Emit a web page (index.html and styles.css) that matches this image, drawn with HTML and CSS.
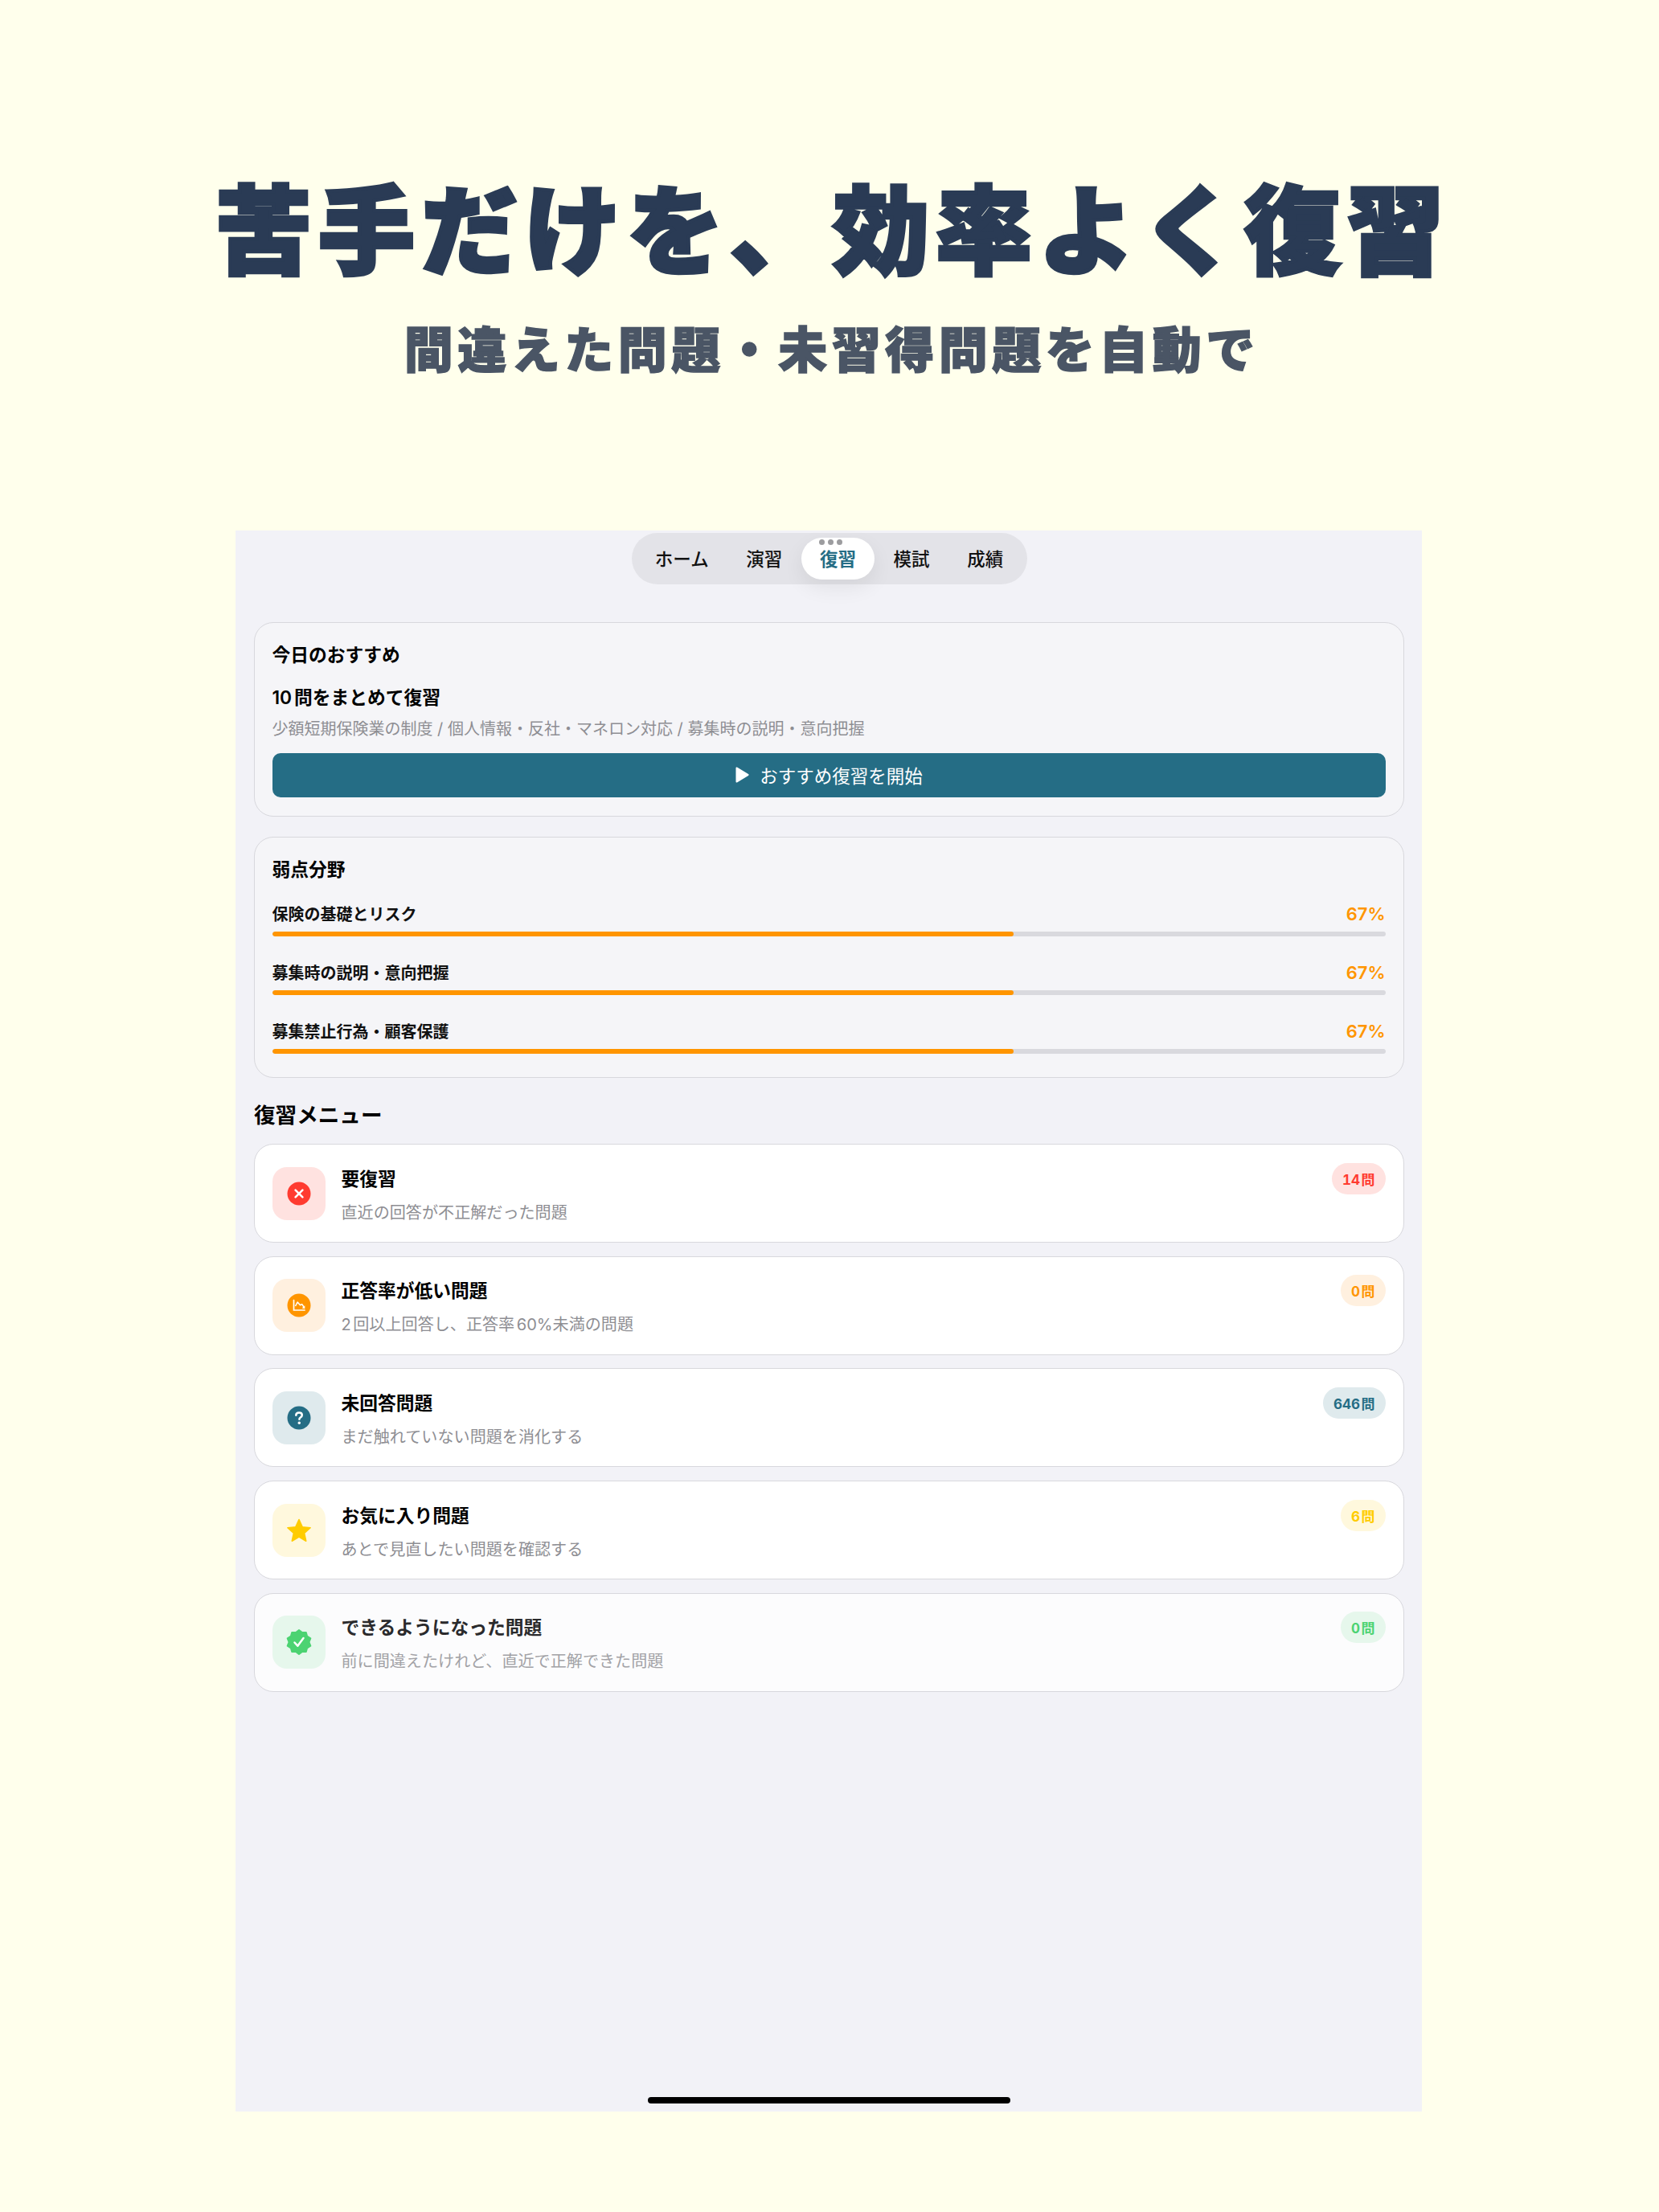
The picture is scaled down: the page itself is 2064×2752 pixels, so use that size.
FILE: index.html
```html
<!DOCTYPE html>
<html lang="ja">
<head>
<meta charset="utf-8">
<title>復習</title>
<link rel="stylesheet" href="styles.css">
</head>
<body>
<header class="hero">
  <h1 class="hero-title">苦手だけを、効率よく復習</h1>
  <p class="hero-sub">間違えた問題・未習得問題を自動で</p>
</header>
<main class="app">
  <nav class="tabs">
    <span class="tab">ホーム</span>
    <span class="tab">演習</span>
    <span class="tab tab-active">復習</span>
    <span class="tab">模試</span>
    <span class="tab">成績</span>
    <span class="dots"><i></i><i></i><i></i></span>
  </nav>

  <section class="card card-rec">
    <h2 class="card-title">今日のおすすめ</h2>
    <p class="rec-head">10問をまとめて復習</p>
    <p class="rec-sub">少額短期保険業の制度 / 個人情報・反社・マネロン対応 / 募集時の説明・意向把握</p>
    <button class="start">
      <svg class="play" viewBox="0 0 18 22"><path d="M1.5 2.5v17a1 1 0 0 0 1.5.9l14-8.5a1 1 0 0 0 0-1.8L3 1.6a1 1 0 0 0-1.5.9z" fill="#fff"/></svg>
      <span>おすすめ復習を開始</span>
    </button>
  </section>

  <section class="card card-weak">
    <h2 class="card-title">弱点分野</h2>
    <div class="weak-list">
      <div class="weak">
        <div class="weak-line"><span class="weak-name">保険の基礎とリスク</span><span class="weak-pct">67%</span></div>
        <div class="track"><div class="fill" style="width:66.6%"></div></div>
      </div>
      <div class="weak">
        <div class="weak-line"><span class="weak-name">募集時の説明・意向把握</span><span class="weak-pct">67%</span></div>
        <div class="track"><div class="fill" style="width:66.6%"></div></div>
      </div>
      <div class="weak">
        <div class="weak-line"><span class="weak-name">募集禁止行為・顧客保護</span><span class="weak-pct">67%</span></div>
        <div class="track"><div class="fill" style="width:66.6%"></div></div>
      </div>
    </div>
  </section>

  <h2 class="menu-title">復習メニュー</h2>
  <div class="menu">
    <article class="row">
      <div class="ico ico-red">
        <svg class="glyph" viewBox="0 0 30 30"><circle cx="15" cy="15" r="14.5" fill="#ff3b30"/><path d="M10.6 10.6l8.8 8.8M19.4 10.6l-8.8 8.8" stroke="#fff" stroke-width="2.6" stroke-linecap="round" fill="none"/></svg>
      </div>
      <div class="txt"><h3 class="row-title">要復習</h3><p class="row-sub">直近の回答が不正解だった問題</p></div>
      <span class="badge badge-red">14 問</span>
    </article>
    <article class="row">
      <div class="ico ico-orange">
        <svg class="glyph" viewBox="0 0 30 30"><circle cx="15" cy="15" r="14.5" fill="#ff9500"/><path d="M8.5 8.5v12.5h13.5" stroke="#fff" stroke-width="1.7" stroke-linecap="round" fill="none"/><path d="M10.5 16l2.6-5 3.4 3.8 2.2-1.2 2.3 3.4" stroke="#fff" stroke-width="1.6" stroke-linejoin="round" fill="none"/><path d="M22.3 15.2v4l-3.7-.6z" fill="#fff"/></svg>
      </div>
      <div class="txt"><h3 class="row-title">正答率が低い問題</h3><p class="row-sub">2回以上回答し、正答率60%未満の問題</p></div>
      <span class="badge badge-orange">0 問</span>
    </article>
    <article class="row">
      <div class="ico ico-teal">
        <svg class="glyph" viewBox="0 0 30 30"><circle cx="15" cy="15" r="14.5" fill="#256d85"/><path d="M11.3 11.8c0-2 1.6-3.4 3.8-3.4s3.7 1.3 3.7 3.1c0 1.5-.8 2.2-2 3-1 .7-1.4 1.2-1.4 2.3" stroke="#fff" stroke-width="2.5" stroke-linecap="round" fill="none"/><circle cx="15.3" cy="21.3" r="1.7" fill="#fff"/></svg>
      </div>
      <div class="txt"><h3 class="row-title">未回答問題</h3><p class="row-sub">まだ触れていない問題を消化する</p></div>
      <span class="badge badge-teal">646 問</span>
    </article>
    <article class="row">
      <div class="ico ico-yellow">
        <svg class="glyph glyph-lg" viewBox="0 0 34 34"><path d="M17 3.5l4.1 9.2 10 1-7.5 6.7 2.1 9.8L17 25.1l-8.7 5.1 2.1-9.8-7.5-6.7 10-1z" fill="#ffcc00" stroke="#ffcc00" stroke-width="1.6" stroke-linejoin="round"/></svg>
      </div>
      <div class="txt"><h3 class="row-title">お気に入り問題</h3><p class="row-sub">あとで見直したい問題を確認する</p></div>
      <span class="badge badge-yellow">6 問</span>
    </article>
    <article class="row row-faded">
      <div class="ico ico-green">
        <svg class="glyph glyph-lg" viewBox="-17 -17 34 34"><polygon transform="rotate(-90)" points="15,0 11.9,3.9 12.1,8.8 7.3,10.1 4.6,14.3 0,12.5 -4.6,14.3 -7.3,10.1 -12.1,8.8 -11.9,3.9 -15,0 -11.9,-3.9 -12.1,-8.8 -7.3,-10.1 -4.6,-14.3 0,-12.5 4.6,-14.3 7.3,-10.1 12.1,-8.8 11.9,-3.9" fill="#4cd372" stroke="#4cd372" stroke-width="2" stroke-linejoin="round"/><path d="M-5.5 .5l3.8 4.2L5.5-5" stroke="#fff" stroke-width="2.5" stroke-linecap="round" stroke-linejoin="round" fill="none"/></svg>
      </div>
      <div class="txt"><h3 class="row-title">できるようになった問題</h3><p class="row-sub">前に間違えたけれど、直近で正解できた問題</p></div>
      <span class="badge badge-green">0 問</span>
    </article>
  </div>
  <div class="home-bar"></div>
</main>
</body>
</html>
```

FILE: styles.css
```css
* { box-sizing: border-box; }
html, body { margin: 0; padding: 0; }
body {
  width: 2064px;
  height: 2752px;
  background: #ffffec;
  font-family: Inter, "Noto Sans CJK JP", sans-serif;
  color: #000;
  overflow: hidden;
  text-autospace: normal;
}
h1, h2, h3, p { margin: 0; font-weight: inherit; }

.hero { height: 660px; padding-top: 210px; text-align: center; font-family: "Noto Sans CJK JP", sans-serif; }
.hero-title {
  font-size: 120px;
  line-height: 140px;
  font-weight: 900;
  letter-spacing: 8px;
  text-indent: 8px;
  color: #2a3b55;
  -webkit-text-stroke: 4.5px #2a3b55;
  white-space: nowrap;
}
.hero-sub {
  margin-top: 42px;
  font-size: 61px;
  line-height: 80px;
  font-weight: 900;
  letter-spacing: 5.5px;
  text-indent: 5.5px;
  color: #4a5565;
  -webkit-text-stroke: 1.5px #4a5565;
  white-space: nowrap;
}

.app {
  position: relative;
  width: 1476px;
  height: 1967px;
  margin-left: 293px;
  padding: 3px 22px 0 23px;
  background: #f2f2f7;
}

.tabs {
  position: relative;
  width: 492px;
  height: 64px;
  margin: 0 auto;
  padding: 0 6px;
  display: flex;
  align-items: center;
  background: #e3e3e8;
  border-radius: 32px;
}
.tab {
  height: 52px;
  padding: 0 0 3px;
  width: 92px;
  justify-content: center;
  display: flex;
  align-items: center;
  font-size: 22.5px;
  font-weight: 500;
  color: #111;
  border-radius: 26px;
}
.tab:first-child { width: 114px; }
.tab-active {
  background: #fff;
  color: #256d85;
  font-weight: 600;
  box-shadow: 0 10px 26px rgba(0, 0, 0, .07);
}
.dots {
  position: absolute;
  left: 233px;
  top: 8px;
  display: flex;
  gap: 4px;
}
.dots i { width: 7px; height: 7px; border-radius: 50%; background: #9c9c9f; }

.card {
  background: #f5f5f8;
  border: 1.5px solid #d8d8dd;
  border-radius: 24px;
  padding: 24.5px 22.5px 23.5px 21.5px;
}
.card-rec { margin-top: 47px; }
.card-weak { margin-top: 25px; padding-bottom: 29.5px; }
.card-title { font-size: 22.75px; line-height: 30px; font-weight: 600; }

.rec-head { margin-top: 23px; font-size: 22.75px; line-height: 30px; font-weight: 600; }
.rec-sub { margin-top: 9px; font-size: 20px; line-height: 30px; color: #8e8e93; white-space: nowrap; }
.start {
  width: 100%;
  height: 55px;
  margin-top: 15px;
  border: 0;
  border-radius: 10px;
  background: #256d85;
  color: #fff;
  font: inherit;
  font-size: 22.5px;
  display: flex;
  align-items: center;
  justify-content: center;
  gap: 13px;
}
.play { width: 18px; height: 22px; }

.weak-list { margin-top: 26px; display: flex; flex-direction: column; gap: 31px; }
.weak-line { display: flex; justify-content: space-between; align-items: center; height: 28px; }
.weak-name { font-size: 20px; font-weight: 600; color: #111; }
.weak-pct { font-size: 22px; font-weight: 600; color: #ff9500; }
.track { height: 6px; margin-top: 8px; border-radius: 3px; background: #d9d9de; overflow: hidden; }
.fill { height: 100%; border-radius: 3px; background: #ff9500; }

.menu-title { margin-top: 28px; font-size: 26.6px; line-height: 36px; font-weight: 600; }
.menu { margin-top: 18px; display: flex; flex-direction: column; gap: 16.7px; }
.row {
  min-height: 123px;
  padding: 20px 22.5px 20px 21.5px;
  display: flex;
  align-items: center;
  gap: 20px;
  background: #fff;
  border: 1.5px solid #d8d8dd;
  border-radius: 24px;
}
.row-faded { background: #fcfcfd; }
.row-faded .row-title { color: #2a2a2c; }
.row-faded .row-sub { color: #a2a2a6; }
.ico {
  width: 66px;
  height: 66px;
  flex: none;
  display: flex;
  align-items: center;
  justify-content: center;
  border-radius: 18px;
}
.ico-red { background: #ffe2e0; }
.ico-orange { background: #fff0df; }
.ico-teal { background: #dfeaed; }
.ico-yellow { background: #fff8dd; }
.ico-green { background: #e6f7ec; }
.glyph { width: 30px; height: 30px; }
.glyph-lg { width: 34px; height: 34px; }
.txt { flex: 1; padding-top: 6px; }
.row-title { font-size: 22.75px; line-height: 30px; font-weight: 600; }
.row-sub { margin-top: 12px; font-size: 20.1px; line-height: 30px; color: #8e8e93; }
.badge {
  align-self: flex-start;
  height: 39px;
  margin-top: 2.5px;
  padding: 0 13px;
  display: flex;
  align-items: center;
  border-radius: 20px;
  font-size: 17px;
  font-weight: 700;
  font-variant-numeric: tabular-nums;
  word-spacing: -3px;
  white-space: nowrap;
}
.badge-red { background: #ffe2e0; color: #ff3b30; }
.badge-orange { background: #fff0df; color: #ff9500; }
.badge-teal { background: #dfeaed; color: #256d85; }
.badge-yellow { background: #fff8dd; color: #ffcc00; }
.badge-green { background: #e6f7ec; color: #4cd372; }

.home-bar {
  position: absolute;
  left: 513px;
  bottom: 10px;
  width: 451px;
  height: 8px;
  border-radius: 4px;
  background: #000;
}
```
